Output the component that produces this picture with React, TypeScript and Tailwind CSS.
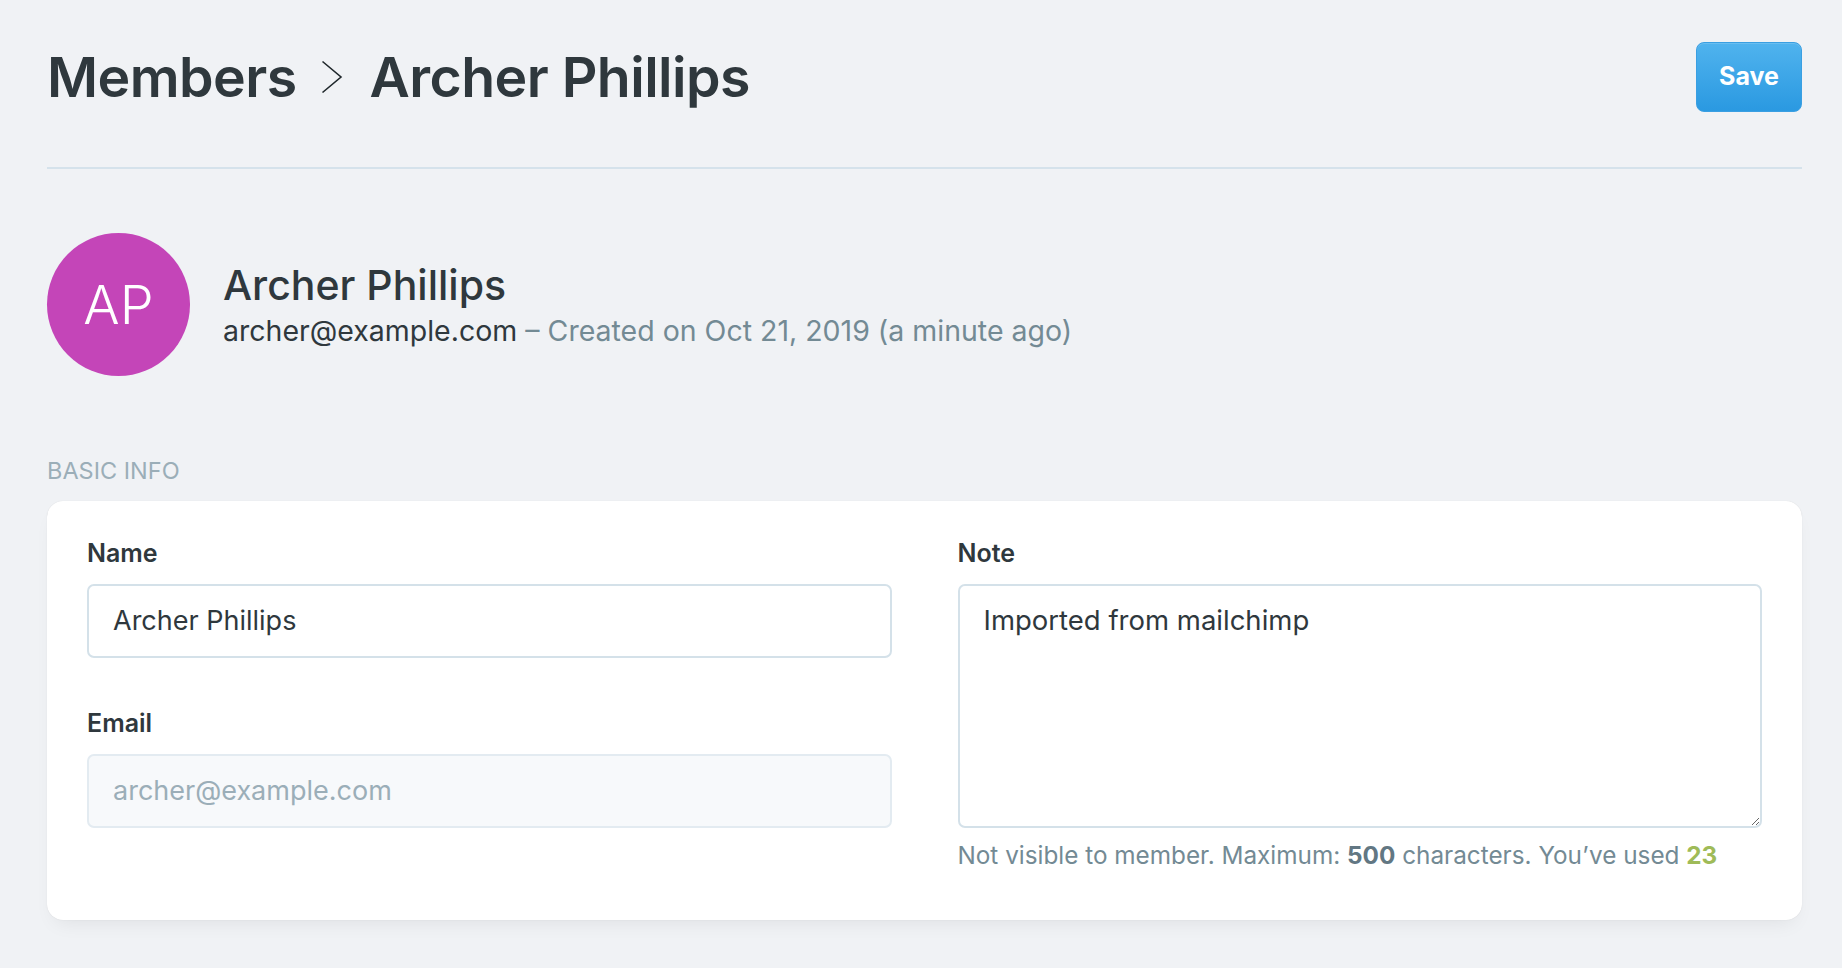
import { useState } from "react";

function Chevron() {
  return (
    <svg width="22" height="34" viewBox="0 0 22 34" fill="none" className="ml-[24px] mr-[27px] shrink-0">
      <polyline points="1.5,1.5 20,17 1.5,32.5" stroke="#1f272b" strokeWidth="1.6" strokeLinejoin="miter" />
    </svg>
  );
}

export default function App() {
  const [name, setName] = useState("Archer Phillips");
  const [note, setNote] = useState("Imported from mailchimp");

  return (
    <div className="min-h-screen bg-[#f0f2f5] font-['Inter',sans-serif] text-[#2f383d]">
      <div className="pl-[47px] pr-[40px]">
        {/* header */}
        <header className="flex items-center justify-between pt-[42px] pb-[55px] border-b-2 border-[#d5e2eb]">
          <h2 className="flex items-center text-[55.4px] leading-[1.21] font-semibold tracking-[-0.01em]">
            <span>Members</span>
            <Chevron />
            <span>Archer Phillips</span>
          </h2>
          <button className="h-[70px] w-[106px] rounded-[8px] border border-[#3a9fe2] bg-[linear-gradient(#50b3ee,#2a99e1)] text-white text-[25px] font-bold shadow-[inset_0_1px_0_rgba(255,255,255,0.15)]">
            Save
          </button>
        </header>

        {/* member summary */}
        <div className="flex items-center gap-[33px] mt-[64px]">
          <div className="w-[143px] h-[143px] rounded-full bg-[#c445b8] flex items-center justify-center text-white text-[54px] font-light leading-none">
            AP
          </div>
          <div className="flex flex-col pt-[2px]">
            <h3 className="text-[41px] leading-[1.2] font-medium">Archer Phillips</h3>
            <p className="text-[28.5px] leading-[1.35] text-[#738a94] mt-[2px]">
              <span className="text-[#2f383d]">archer@example.com</span> – Created on Oct 21, 2019 (a minute ago)
            </p>
          </div>
        </div>

        {/* basic info */}
        <h4 className="mt-[79px] text-[23.5px] leading-[1.4] uppercase text-[#9baeb8]">Basic info</h4>
        <div className="mt-[13px] bg-white rounded-[16px] shadow-[0_0_1px_rgba(0,0,0,0.14),0_10px_20px_-8px_rgba(0,0,0,0.08)] grid grid-cols-2 gap-x-[66px] px-[40px] pt-[37px] pb-[47px]">
          <div className="flex flex-col">
            <label className="text-[25px] leading-[30px] font-semibold">Name</label>
            <input
              value={name}
              onChange={(e) => setName(e.target.value)}
              className="mt-[16px] h-[74px] rounded-[7px] border-2 border-[#d4e1e9] bg-white px-[24px] text-[27px] text-[#2f383d] outline-none"
            />
            <label className="mt-[50px] text-[25px] leading-[30px] font-semibold">Email</label>
            <input
              value="archer@example.com"
              readOnly
              className="mt-[16px] h-[74px] rounded-[7px] border-2 border-[#e3ebf1] bg-[#f7f9fb] px-[24px] text-[27px] text-[#9baeb8] outline-none"
            />
          </div>
          <div className="flex flex-col">
            <label className="text-[25px] leading-[30px] font-semibold">Note</label>
            <textarea
              value={note}
              onChange={(e) => setNote(e.target.value)}
              className="mt-[16px] h-[244px] rounded-[7px] border-2 border-[#d4e1e9] bg-white px-[24px] pt-[14px] text-[27.5px] leading-[1.5] text-[#2f383d] outline-none resize-y"
            />
            <p className="mt-[9px] text-[24.3px] leading-[36px] text-[#738a94]">
              Not visible to member. Maximum: <b className="font-bold text-[#627783]">500</b> characters. You’ve used{" "}
              <b className="font-bold text-[#9fbb58]">{note.length}</b>
            </p>
          </div>
        </div>
      </div>
    </div>
  );
}
